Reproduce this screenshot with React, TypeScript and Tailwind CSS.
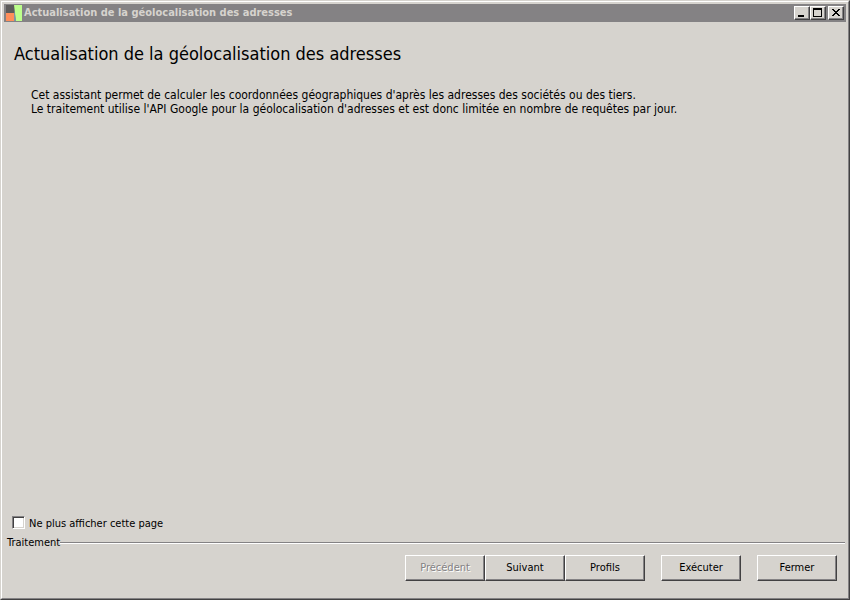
import React, { useState } from 'react'
import clsx from 'clsx'

const TITLE = 'Actualisation de la géolocalisation des adresses'

interface WizardButtonProps {
  label: string
  disabled?: boolean
}

function WizardButton({ label, disabled }: WizardButtonProps) {
  return (
    <button
      type="button"
      disabled={disabled}
      className={clsx(
        'h-[26px] w-20 bg-[#d6d3ce] border border-t-white border-l-white border-r-[#424142] border-b-[#424142] shadow-[inset_-1px_-1px_0_#848284]',
        disabled && 'text-[#848284] [text-shadow:1px_1px_0_#fff]'
      )}
    >
      {label}
    </button>
  )
}

interface CaptionButtonProps {
  label: string
  children: React.ReactNode
}

function CaptionButton({ label, children }: CaptionButtonProps) {
  return (
    <button
      type="button"
      aria-label={label}
      className="h-[14px] w-4 bg-[#d6d3ce] border border-t-white border-l-white border-r-[#424142] border-b-[#424142] shadow-[inset_-1px_-1px_0_#848284]"
    >
      <svg viewBox="0 0 14 12" className="block h-3 w-[14px]" shapeRendering="crispEdges">
        {children}
      </svg>
    </button>
  )
}

function TitleBar() {
  return (
    <header className="flex h-[18px] items-center bg-[#848284] pr-[2px] pl-[1px]">
      <svg viewBox="0 0 18 18" className="h-[18px] w-[18px] shrink-0">
        <rect x="1" y="1" width="9" height="8" fill="#5d5b5a" />
        <rect x="1" y="9" width="8" height="8" fill="#ff8e5a" />
        <path d="M9 1H17V17H11Z" fill="#bdff8c" />
        <path d="M9 5L11 17H9Z" fill="#7b96a5" />
      </svg>
      <h1 className="flex-1 truncate pl-px text-[11px] font-bold text-[#d6d3ce]">{TITLE}</h1>
      <div className="flex">
        <CaptionButton label="Réduire">
          <rect x="3" y="8" width="6" height="2" />
        </CaptionButton>
        <CaptionButton label="Agrandir">
          <path d="M2 1H11V10H2ZM3 3V9H10V3Z" fillRule="evenodd" />
        </CaptionButton>
        <div className="ml-[2px] flex">
          <CaptionButton label="Fermer la fenêtre">
            <path d="M3 2H5V3H6V4H8V3H9V2H11V3H10V4H9V5H8V6H9V7H10V8H11V9H9V8H8V7H6V8H5V9H3V8H4V7H5V6H6V5H5V4H4V3H3Z" />
          </CaptionButton>
        </div>
      </div>
    </header>
  )
}

export default function App() {
  const [hidePage, setHidePage] = useState(false)

  return (
    <div className="flex min-h-screen flex-col border border-t-[#d6d3ce] border-l-[#d6d3ce] border-r-[#424142] border-b-[#424142] bg-[#d6d3ce] font-['DejaVu_Sans_Condensed','DejaVu_Sans',sans-serif] text-[11px] text-black">
      <div className="flex flex-1 flex-col border border-t-white border-l-white border-r-[#848284] border-b-[#848284] p-[2px]">
        <TitleBar />

        <main className="flex-1 pt-5 pl-[10px]">
          <h2 className="text-[18px] leading-6">{TITLE}</h2>
          <p className="mt-[22px] pl-[17px] text-[12px] leading-[14px]">
            Cet assistant permet de calculer les coordonnées géographiques d'après les adresses des sociétés ou des tiers.
            <br />
            Le traitement utilise l'API Google pour la géolocalisation d'adresses et est donc limitée en nombre de requêtes par jour.
          </p>
        </main>

        <label className="flex items-start gap-1 self-start pl-2 leading-4">
          <input
            type="checkbox"
            checked={hidePage}
            onChange={e => setHidePage(e.target.checked)}
            className="h-[13px] w-[13px] appearance-none border border-t-[#848284] border-l-[#848284] border-r-white border-b-white bg-white shadow-[inset_1px_1px_0_#424142,inset_-1px_-1px_0_#d6d3ce] checked:bg-black"
          />
          Ne plus afficher cette page
        </label>

        {/* Group separator */}
        <div className="mt-[3px] flex items-center pr-px pl-[3px] leading-4">
          <span>Traitement</span>
          <hr className="h-[2px] flex-1 border-t border-b border-t-[#848284] border-b-white" />
        </div>

        <footer className="flex justify-end gap-4 pt-1 pr-[9px] pb-[15px]">
          <div className="flex">
            <WizardButton label="Précédent" disabled />
            <WizardButton label="Suivant" />
            <WizardButton label="Profils" />
          </div>
          <WizardButton label="Exécuter" />
          <WizardButton label="Fermer" />
        </footer>
      </div>
    </div>
  )
}
